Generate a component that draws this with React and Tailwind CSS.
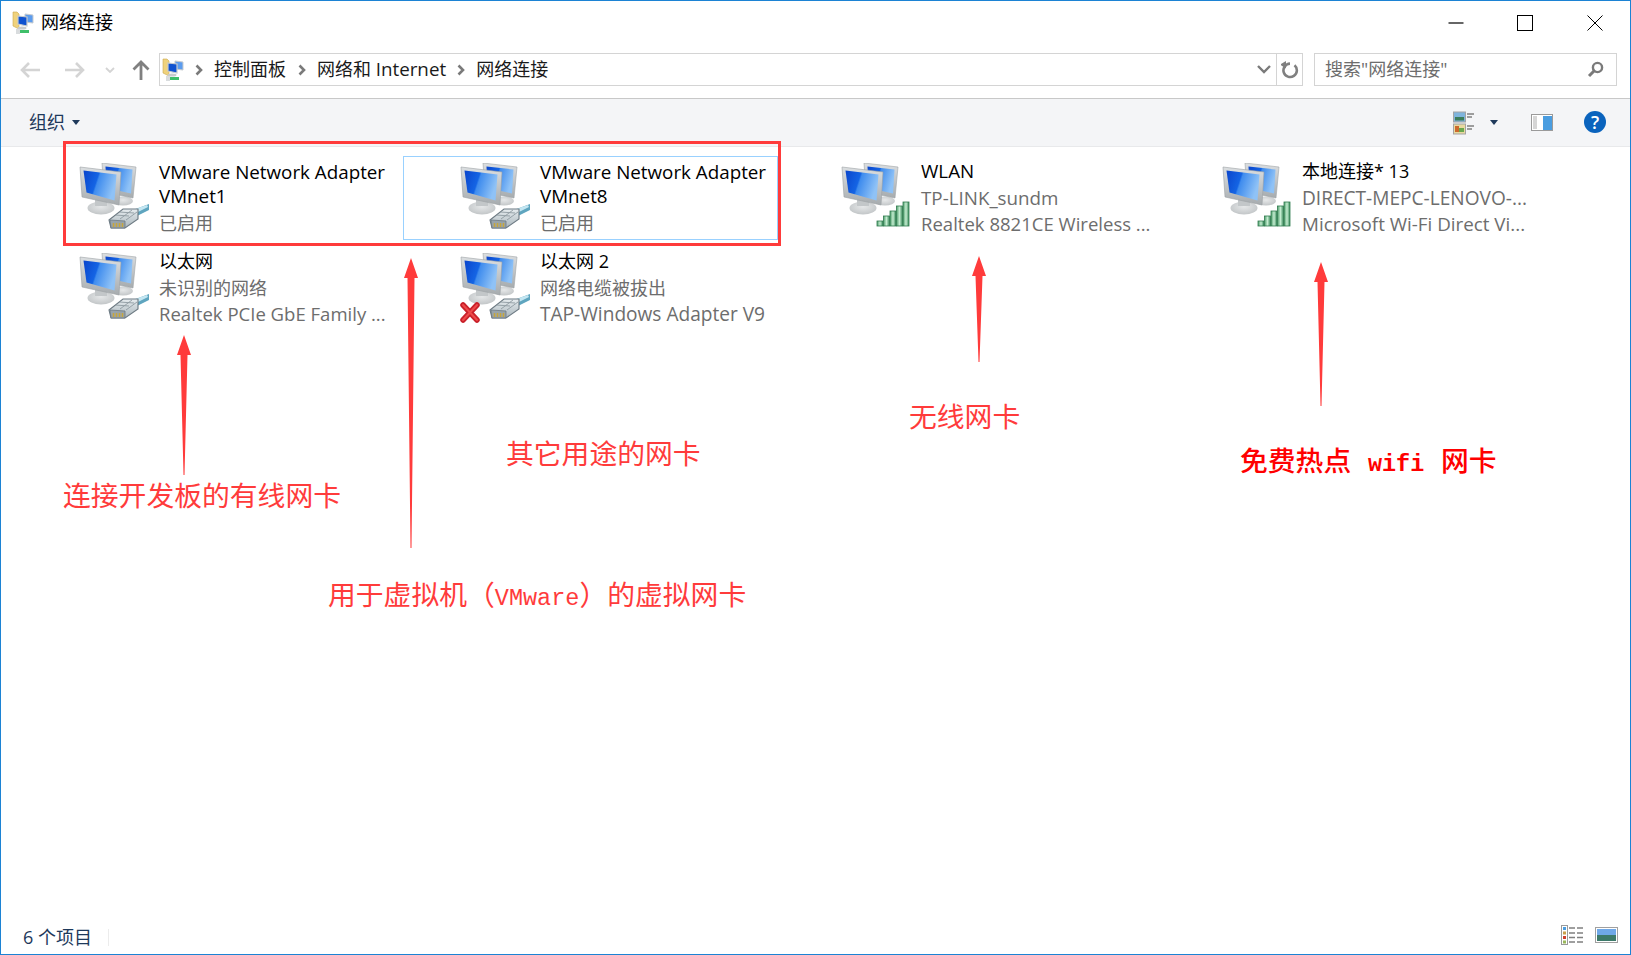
import React from 'react';

// shared gradients for the monitor icons
const Gradients = () => (
  <svg className="absolute w-0 h-0" aria-hidden="true">
    <defs>
      <linearGradient id="screen" x1="0" y1="0" x2="1" y2="0.3">
        <stop offset="0" stopColor="#0a45cc" />
        <stop offset="0.45" stopColor="#1464e4" />
        <stop offset="0.5" stopColor="#3f8cee" />
        <stop offset="1" stopColor="#8fc2f6" />
      </linearGradient>
      <linearGradient id="bezel" x1="0" y1="0" x2="0" y2="1">
        <stop offset="0" stopColor="#dcdfe1" />
        <stop offset="1" stopColor="#a6abae" />
      </linearGradient>
      <radialGradient id="stand" cx="0.5" cy="0.4" r="0.7">
        <stop offset="0" stopColor="#e6e8e9" />
        <stop offset="1" stopColor="#bcc0c2" />
      </radialGradient>
      <linearGradient id="bar" x1="0" y1="0" x2="1" y2="0">
        <stop offset="0" stopColor="#4f9d6c" />
        <stop offset="0.5" stopColor="#c4ecd0" />
        <stop offset="1" stopColor="#3a8a5b" />
      </linearGradient>
      <linearGradient id="plug" x1="0" y1="0" x2="0" y2="1">
        <stop offset="0" stopColor="#e6ecef" />
        <stop offset="1" stopColor="#aab6bc" />
      </linearGradient>
    </defs>
  </svg>
);

const Monitors = () => (
  <>
    <ellipse cx="44" cy="38" rx="10" ry="4.500" fill="url(#stand)" />
    <polygon points="23,0 57,4 54,35 25,29" fill="url(#bezel)" stroke="#a0a5a8" strokeWidth="0.6" />
    <polygon points="26.500,3.500 53.500,6.500 52,30.500 27.500,25" fill="url(#screen)" />
    <ellipse cx="22" cy="45" rx="13.500" ry="6.500" fill="url(#stand)" />
    <rect x="16" y="34" width="12" height="9" fill="#c3c7c9" />
    <polygon points="1,4 42,9 40,42 3,34" fill="url(#bezel)" stroke="#9ca1a4" strokeWidth="0.6" />
    <polygon points="4.500,7.500 37.500,11.500 35.500,37.500 7.500,29.500" fill="url(#screen)" />
  </>
);

const Plug = () => (
  <g>
    <polygon points="54,47 70,41 70,47 58,53" fill="#5fa5bf" />
    <polygon points="56,46 68,42 69,44 59,49" fill="#c3e6f2" />
    <polygon points="30,57 44,46 59,46 59,56 46,65 32,65" fill="url(#plug)" stroke="#6d7a83" strokeWidth="1.100" />
    <polygon points="31,57 46,58 46,65 32,65" fill="#98a3aa" stroke="#6d7a83" strokeWidth="0.800" />
    <path d="M34.500 60v4M37.500 60v4M40.500 60v4M43.500 60v4" stroke="#c7a63c" strokeWidth="1.500" />
    <path d="M36 52l14 1M40 49l15 1M41 56l12-9M47 57l11-8" stroke="#8f9ba2" strokeWidth="0.900" fill="none" />
  </g>
);

const bars = [
  { x: 36, y: 58, h: 5 },
  { x: 42.5, y: 53, h: 10 },
  { x: 49, y: 48, h: 15 },
  { x: 55.5, y: 43, h: 20 },
  { x: 62, y: 39, h: 24 },
];

const Bars = () => (
  <g>
    {bars.map((b) => (
      <rect key={b.x} x={b.x} y={b.y} width="6" height={b.h} fill="url(#bar)" stroke="#2f7a4e" strokeWidth="0.8" />
    ))}
  </g>
);

const Cross = () => (
  <g>
    <path d="M3 52l14 15M17 52L3 67" stroke="#c9202a" strokeWidth="5.500" strokeLinecap="round" />
    <path d="M3 52l14 15M17 52L3 67" stroke="#ee4a4a" strokeWidth="2" strokeLinecap="round" />
  </g>
);

const NetIcon = ({ type, cross }) => (
  <svg className="w-[70px] h-[70px] shrink-0" viewBox="0 0 70 70">
    <Monitors />
    {type === 'wifi' ? <Bars /> : <Plug />}
    {cross && <Cross />}
  </svg>
);

const FolderIcon = () => (
  <svg className="w-[22px] h-[24px] shrink-0" viewBox="0 0 22 24">
    <path d="M1 1h4l2 2v15l-6-3z" fill="#efd27c" stroke="#c9a84f" strokeWidth="0.6" />
    <polygon points="13,3 21,4 21,12 13,11" fill="#5c9cee" stroke="#c7cbce" strokeWidth="1" />
    <polygon points="6,5 15,6 15,15 6,13" fill="#0f52d0" stroke="#c7cbce" strokeWidth="1.200" />
    <ellipse cx="10" cy="17" rx="4.500" ry="1.500" fill="#c8cbcd" />
    <rect x="8" y="19" width="9" height="3" fill="#3fbf6a" />
    <rect x="4" y="18" width="4" height="5" fill="#d9dcde" />
  </svg>
);

const Chevron = () => (
  <svg className="w-[8px] h-[12px] shrink-0" viewBox="0 0 8 12">
    <path d="M1.500 1.500L6 6l-4.500 4.500" fill="none" stroke="#7a7a7a" strokeWidth="2.600" />
  </svg>
);

const Caret = () => (
  <svg className="w-[8px] h-[5px] shrink-0" viewBox="0 0 8 5">
    <path d="M0 0h8L4 5z" fill="#1e395b" />
  </svg>
);

const items = [
  { title: ['VMware Network Adapter', 'VMnet1'], sub: ['已启用'] },
  { title: ['VMware Network Adapter', 'VMnet8'], sub: ['已启用'], selected: true },
  { title: ['WLAN'], sub: ['TP-LINK_sundm', 'Realtek 8821CE Wireless ...'], type: 'wifi' },
  { title: ['本地连接* 13'], sub: ['DIRECT-MEPC-LENOVO-...', 'Microsoft Wi-Fi Direct Vi...'], type: 'wifi' },
  { title: ['以太网'], sub: ['未识别的网络', 'Realtek PCIe GbE Family ...'] },
  { title: ['以太网 2'], sub: ['网络电缆被拔出', 'TAP-Windows Adapter V9'], cross: true },
];

// latin runs in the reference are a little wider than Open Sans at 18px
const sizeOf = (t) => {
  if (/[\u4e00-\u9fff]/.test(t)) return 'text-[18px]';
  if (t.startsWith('Realtek')) return 'text-[18.55px]';
  if (t.startsWith('TAP') || t.startsWith('DIRECT')) return 'text-[19.1px]';
  return 'text-[18.8px]';
};

const AdapterItem = ({ item }) => (
  <div className={`flex w-[375px] h-[84px] pl-[56px] pt-[6px] border ${item.selected ? 'border-[#99d1ff]' : 'border-transparent'}`}>
    <NetIcon type={item.type} cross={item.cross} />
    <div className={`ml-[10px] whitespace-nowrap ${item.title.length > 1 ? '-mt-[3px]' : '-mt-[4px]'}`}>
      {item.title.map((t) => (
        <div key={t} className={`h-[24px] leading-[24px] text-black ${sizeOf(t)}`}>{t}</div>
      ))}
      {item.sub.map((t, i) => (
        <div key={t} className={`h-[26px] leading-[26px] text-[#6d6d6d] ${sizeOf(t)} ${i === 0 ? 'mt-[2px]' : ''}`}>{t}</div>
      ))}
    </div>
  </div>
);

const Arrows = () => {
  const arrows = [
    { x: 184, tip: 335, end: 475 },
    { x: 411, tip: 258, end: 548 },
    { x: 979, tip: 256, end: 362 },
    { x: 1321, tip: 262, end: 406 },
  ];
  return (
    <svg className="absolute inset-0 pointer-events-none" width="1631" height="955">
      {arrows.map((a) => (
        <polygon
          key={a.x}
          fill="#ff3b3b"
          points={`${a.x},${a.tip} ${a.x + 7},${a.tip + 20} ${a.x + 3.5},${a.tip + 20} ${a.x + 0.5},${a.end} ${a.x - 0.5},${a.end} ${a.x - 3.5},${a.tip + 20} ${a.x - 7},${a.tip + 20}`}
        />
      ))}
    </svg>
  );
};

const noteFont = "font-['Liberation_Mono','Noto_Sans_CJK_SC',monospace]";

export default function App() {
  return (
    <div className="relative w-[1631px] h-[955px] overflow-hidden bg-white font-['Open_Sans','Noto_Sans_CJK_SC',sans-serif]">
      <Gradients />
      <div className="flex flex-col w-full h-full border border-[#1c83d4]">
        {/* title bar */}
        <div className="flex items-center h-[43px] pl-[11px] shrink-0">
          <FolderIcon />
          <span className="ml-[7px] text-[18px] text-black">网络连接</span>
          <div className="ml-auto flex items-center">
            <svg className="w-[16px] h-[16px]" viewBox="0 0 16 16"><path d="M0.500 8h15" stroke="#000" strokeWidth="1.200" /></svg>
            <svg className="ml-[53px] w-[16px] h-[16px]" viewBox="0 0 16 16"><rect x="0.500" y="0.500" width="15" height="15" fill="none" stroke="#000" /></svg>
            <svg className="ml-[54px] mr-[27px] w-[16px] h-[16px]" viewBox="0 0 16 16"><path d="M0.500 0.500l15 15M15.500 0.500l-15 15" stroke="#000" /></svg>
          </div>
        </div>

        {/* nav row */}
        <div className="flex items-center h-[55px] pb-[3px] shrink-0 border-b border-[#c8c8c8]">
          <svg className="ml-[18px] w-[22px] h-[18px]" viewBox="0 0 22 18"><path d="M10 2L3 9l7 7M3 9h18" fill="none" stroke="#d4d4d4" strokeWidth="2.600" /></svg>
          <svg className="ml-[23px] w-[22px] h-[18px]" viewBox="0 0 22 18"><path d="M12 2l7 7-7 7M19 9H1" fill="none" stroke="#d4d4d4" strokeWidth="2.600" /></svg>
          <svg className="ml-[19px] w-[10px] h-[6px]" viewBox="0 0 10 6"><path d="M1 1l4 4 4-4" fill="none" stroke="#d4d4d4" strokeWidth="1.800" /></svg>
          <svg className="ml-[17px] w-[18px] h-[20px]" viewBox="0 0 18 20"><path d="M1.500 9.500L9 2l7.500 7.500M9 2v18" fill="none" stroke="#808080" strokeWidth="2.800" /></svg>

          <div className="ml-[9px] flex items-center w-[1144px] h-[33px] border border-[#d4d4d4]">
            <div className="ml-[2px] flex items-center"><FolderIcon /></div>
            <div className="ml-[11px]"><Chevron /></div>
            <span className="ml-[11px] text-[18px] text-[#1a1a1a]">控制面板</span>
            <div className="ml-[12px]"><Chevron /></div>
            <span className="ml-[11px] text-[18px] text-[#1a1a1a]">网络和 <span className="text-[18.8px]">Internet</span></span>
            <div className="ml-[11px]"><Chevron /></div>
            <span className="ml-[11px] text-[18px] text-[#1a1a1a]">网络连接</span>
            <div className="ml-auto flex items-center h-full">
              <svg className="mr-[5px] w-[14px] h-[9px]" viewBox="0 0 14 9"><path d="M1 1l6 6 6-6" fill="none" stroke="#7a7a7a" strokeWidth="2.400" /></svg>
              <div className="flex items-center justify-center w-[26px] h-full border-l border-[#d4d4d4]">
                <svg className="w-[18px] h-[18px]" viewBox="0 0 18 18"><path d="M4.500 4.200A6.700 6.700 0 1 0 9 2.600" fill="none" stroke="#808080" strokeWidth="2.600" transform="matrix(-1 0 0 1 18 0)" /><path d="M8 0v7.500L14 3.700z" fill="#808080" transform="matrix(-1 0 0 1 18 0) translate(5 0)" /></svg>
              </div>
            </div>
          </div>

          <div className="ml-[11px] flex items-center w-[303px] h-[33px] pl-[10px] border border-[#d4d4d4]">
            <span className="text-[18px] text-[#6d6d6d]">搜索"网络连接"</span>
            <svg className="ml-auto mr-[12px] w-[17px] h-[17px]" viewBox="0 0 17 17"><circle cx="10.500" cy="6.500" r="4.600" fill="none" stroke="#7a7a7a" strokeWidth="2.400" /><path d="M7 10l-5 5" stroke="#7a7a7a" strokeWidth="3" /></svg>
          </div>
        </div>

        {/* toolbar */}
        <div className="flex items-center h-[48px] shrink-0 bg-[#f4f5f7] border-b border-[#e8e9eb]">
          <span className="ml-[28px] text-[18px] text-[#1e395b]">组织</span>
          <div className="ml-[7px]"><Caret /></div>
          <div className="ml-auto flex items-center">
            <svg className="w-[22px] h-[24px]" viewBox="0 0 22 24">
              <rect x="0.500" y="1" width="12" height="10" fill="#7fb4dc" stroke="#a3a3a3" />
              <rect x="2" y="6" width="9" height="3.500" fill="#3c7d5a" />
              <rect x="0.500" y="13" width="12" height="10" fill="#e9d9a0" stroke="#a3a3a3" />
              <rect x="2" y="15" width="4" height="6" fill="#cc6a2c" />
              <rect x="6" y="17" width="5" height="4" fill="#6aa84f" />
              <path d="M14 3h7M14 6h5M14 15h7M14 18h5" stroke="#808080" strokeWidth="1.400" />
            </svg>
            <div className="ml-[15px]"><Caret /></div>
            <svg className="ml-[33px] w-[22px] h-[17px]" viewBox="0 0 22 17">
              <rect x="0.500" y="0.500" width="21" height="16" fill="#fff" stroke="#9a9a9a" />
              <rect x="2" y="2" width="4" height="13" fill="#d6d6d6" />
              <rect x="12" y="2" width="9" height="14" fill="#4a9de0" />
            </svg>
            <div className="ml-[31px] mr-[24px] mb-[1px] flex items-center justify-center w-[22px] h-[22px] rounded-full bg-[#0a63bd] text-white text-[18px] font-semibold leading-none">?</div>
          </div>
        </div>

        {/* adapter grid */}
        <div className="flex-1 pl-[21px] pt-[9px] grid grid-cols-[repeat(4,381px)] auto-rows-[90px]">
          {items.map((item) => (
            <AdapterItem key={item.title.join()} item={item} />
          ))}
        </div>

        {/* status bar */}
        <div className="flex items-center h-[36px] shrink-0">
          <span className="ml-[22px] mt-[3px] text-[18px] text-[#1e395b]">6 个项目</span>
          <div className="ml-[16px] mt-[2px] w-px h-[17px] bg-[#ececec]" />
          <div className="ml-auto mb-[2px] flex items-center">
            <svg className="w-[23px] h-[20px]" viewBox="0 0 23 20">
              <rect x="0.500" y="0.500" width="6" height="19" fill="#fff" stroke="#9a9a9a" />
              <rect x="2" y="2" width="3" height="3" fill="#4a9de0" />
              <rect x="2" y="6.500" width="3" height="3" fill="#c9a04a" />
              <rect x="2" y="11" width="3" height="3" fill="#d0402c" />
              <rect x="2" y="15.500" width="3" height="3" fill="#9ab85a" />
              <path d="M8 3h6M16 3h6M8 8h6M16 8h6M8 12.500h6M16 12.500h6M8 17h6M16 17h6" stroke="#808080" strokeWidth="1.300" />
            </svg>
            <svg className="ml-[11px] mr-[12px] w-[23px] h-[16px]" viewBox="0 0 23 16">
              <rect x="0.500" y="0.500" width="22" height="15" fill="#fff" stroke="#a0a0a0" />
              <rect x="2" y="2" width="19" height="6" fill="#6fa8e8" />
              <rect x="2" y="8" width="19" height="6" fill="#3d7a6a" />
            </svg>
          </div>
        </div>
      </div>

      {/* annotations drawn on top of the window */}
      <div className="absolute left-[63px] top-[141px] w-[718px] h-[105px] border-[3px] border-[#ff3b3b]" />
      <Arrows />
      <span className={`absolute left-[63px] top-[479px] text-[27.8px] leading-[40px] text-[#ff3b3b] whitespace-nowrap ${noteFont}`}>连接开发板的有线网卡</span>
      <span className={`absolute left-[506px] top-[437px] text-[27.8px] leading-[40px] text-[#ff3b3b] whitespace-nowrap ${noteFont}`}>其它用途的网卡</span>
      <span className={`absolute left-[328px] top-[578px] text-[27.8px] leading-[40px] text-[#ff3b3b] whitespace-nowrap ${noteFont}`}>用于虚拟机（<span className="text-[23.5px]">VMware</span>）的虚拟网卡</span>
      <span className={`absolute left-[909px] top-[400px] text-[27.8px] leading-[40px] text-[#ff3b3b] whitespace-nowrap ${noteFont}`}>无线网卡</span>
      <span className={`absolute left-[1240px] top-[444px] text-[27.8px] leading-[40px] font-medium text-[#ff0000] whitespace-nowrap ${noteFont}`}>免费热点 <span className="text-[23.5px] font-bold">wifi</span> 网卡</span>
    </div>
  );
}
